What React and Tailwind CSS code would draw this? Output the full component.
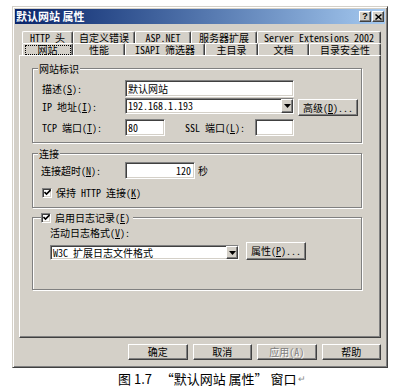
import React from "react";

const U = ({ c }) => <span className="underline underline-offset-1">{c}</span>;

const raised =
  "bg-[#d4d0c8] border border-t-white border-l-white border-r-[#404040] border-b-[#404040] shadow-[inset_-1px_-1px_0_#808080]";
const sunken =
  "bg-white border border-t-[#808080] border-l-[#808080] border-b-white border-r-white shadow-[inset_1px_1px_0_#404040,inset_-1px_-1px_0_#d4d0c8]";

function Tab({ className, children, selected }) {
  return (
    <div
      className={
        "h-[12px] overflow-hidden flex items-center justify-center border-t border-l border-r border-t-white border-l-white border-r-[#404040] rounded-t-[2px] shadow-[inset_-1px_0_0_#808080] bg-[#d4d0c8] whitespace-nowrap leading-[10px] " +
        className +
        (selected ? " relative z-10" : "")
      }
    >
      {selected ? (
        <span className="border border-dotted border-black px-[12px] leading-[8px] h-[10px] flex items-center">
          {children}
        </span>
      ) : (
        <span className="leading-[10px] h-[10px] block">{children}</span>
      )}
    </div>
  );
}

function Check() {
  return (
    <div className={sunken + " w-[10px] h-[10px] flex items-center justify-center shrink-0"}>
      <svg width="7" height="7" viewBox="0 0 7 7">
        <path d="M0.5 3 L2.5 5 L6.5 1" stroke="#000" strokeWidth="1.6" fill="none" />
      </svg>
    </div>
  );
}

function Select({ className, children }) {
  return (
    <div className={sunken + " flex items-center justify-between " + className}>
      <span className="pl-[2px] leading-none">{children}</span>
      <div className={raised + " w-[12px] h-full flex items-center justify-center"}>
        <svg width="7" height="4" viewBox="0 0 7 4">
          <path d="M0 0 H7 L3.5 4 Z" fill="#000" />
        </svg>
      </div>
    </div>
  );
}

function Button({ className, children }) {
  return (
    <div className={raised + " flex items-center justify-center leading-none " + className}>
      {children}
    </div>
  );
}

export default function App() {
  return (
    <div className="w-[396px] h-[388px] bg-white overflow-hidden font-['Noto_Sans_Mono_CJK_SC','Liberation_Mono','Noto_Sans_CJK_SC',monospace] text-[10px] text-black">
      <div className="pt-[6px] pl-[12px]">
        {/* window */}
        <div className="w-[376px] h-[362px] bg-[#d4d0c8] border border-t-[#d4d0c8] border-l-[#d4d0c8] border-r-[#404040] border-b-[#404040] shadow-[inset_1px_1px_0_#fff,inset_-1px_-1px_0_#808080] p-[2px] flex flex-col">
          {/* title bar */}
          <div className="h-[15px] bg-linear-to-r from-[#0a246a] to-[#a6caf0] flex items-center justify-between pl-[1px] pr-[1px]">
            <span className="text-white font-bold text-[11px] leading-none font-['Noto_Sans_CJK_SC',sans-serif]">
              默认网站&nbsp;属性
            </span>
            <div className="flex gap-[1px]">
              <div className={raised + " w-[12px] h-[11px] flex items-center justify-center font-bold text-[9px] leading-none font-['Liberation_Sans',sans-serif]"}>
                ?
              </div>
              <div className={raised + " w-[12px] h-[11px] flex items-center justify-center"}>
                <svg width="7" height="6" viewBox="0 0 7 6">
                  <path d="M0.5 0.5 L6.5 5.5 M6.5 0.5 L0.5 5.5" stroke="#000" strokeWidth="1.5" />
                </svg>
              </div>
            </div>
          </div>

          <div className="px-[4px] pt-[7px]">
            {/* tabs */}
            <div className="pl-[3px] flex flex-col">
              <div className="flex h-[12px]">
                <Tab className="w-[51px]">HTTP 头</Tab>
                <Tab className="w-[62px]">自定义错误</Tab>
                <Tab className="w-[56px]">ASP.NET</Tab>
                <Tab className="w-[66px]">服务器扩展</Tab>
                <Tab className="w-[124px]">Server Extensions 2002</Tab>
              </div>
              <div className="flex h-[12px]">
                <Tab className="w-[51px]" selected>网站</Tab>
                <Tab className="w-[52px]">性能</Tab>
                <Tab className="w-[80px]">ISAPI 筛选器</Tab>
                <Tab className="w-[53px]">主目录</Tab>
                <Tab className="w-[51px]">文档</Tab>
                <Tab className="w-[72px]">目录安全性</Tab>
              </div>
            </div>

            {/* panel */}
            <div className="w-[362px] h-[283px] border border-t-white border-l-white border-r-[#404040] border-b-[#404040] shadow-[inset_-1px_-1px_0_#808080] pl-[12px] pt-[12px] flex flex-col">
              {/* group 1 */}
              <div className="relative w-[330px] h-[75px] border border-[#808080] shadow-[inset_1px_1px_0_#fff,1px_1px_0_#fff] pl-[9px] pt-[11px]">
                <span className="absolute left-[5px] -top-[6px] bg-[#d4d0c8] px-[1px] leading-[11px]">网站标识</span>
                <div className="flex items-center h-[17px]">
                  <span className="w-[83px]">描述(<U c="S" />):</span>
                  <div className={sunken + " w-[169px] h-[17px] flex items-center pl-[2px]"}>默认网站</div>
                </div>
                <div className="flex items-start h-[18px] mt-[1px]">
                  <span className="w-[83px] h-[16px] flex items-center">IP 地址(<U c="I" />):</span>
                  <Select className="w-[169px] h-[16px]">192.168.1.193</Select>
                  <Button className="w-[60px] h-[17px] ml-[4px] mt-[1px]">高级(<U c="D" />)...</Button>
                </div>
                <div className="flex items-center h-[17px] mt-[3px]">
                  <span className="w-[83px]">TCP 端口(<U c="T" />):</span>
                  <div className={sunken + " w-[40px] h-[17px] flex items-center pl-[2px]"}>80</div>
                  <span className="ml-[20px] w-[70px]">SSL 端口(<U c="L" />):</span>
                  <div className={sunken + " w-[39px] h-[17px]"}></div>
                </div>
              </div>

              {/* group 2 */}
              <div className="relative w-[330px] h-[55px] mt-[10px] border border-[#808080] shadow-[inset_1px_1px_0_#fff,1px_1px_0_#fff] pl-[8px] pt-[8px]">
                <span className="absolute left-[5px] -top-[6px] bg-[#d4d0c8] px-[1px] leading-[11px]">连接</span>
                <div className="flex items-center h-[17px]">
                  <span className="w-[84px]">连接超时(<U c="N" />):</span>
                  <div className={sunken + " w-[70px] h-[17px] flex items-center justify-end pr-[3px]"}>120</div>
                  <span className="ml-[3px]">秒</span>
                </div>
                <div className="flex items-center mt-[6px] pl-[1px] gap-[4px]">
                  <Check />
                  <span>保持 HTTP 连接(<U c="K" />)</span>
                </div>
              </div>

              {/* group 3 */}
              <div className="relative w-[330px] h-[73px] mt-[9px] border border-[#808080] shadow-[inset_1px_1px_0_#fff,1px_1px_0_#fff] pl-[17px] pt-[9px]">
                <div className="absolute left-[8px] -top-[6px] bg-[#d4d0c8] pr-[3px] flex items-center gap-[4px] leading-[11px]">
                  <Check />
                  <span>启用日志记录(<U c="E" />)</span>
                </div>
                <div className="leading-[12px]">活动日志格式(<U c="V" />):</div>
                <div className="flex items-end mt-[3px]">
                  <Select className="w-[189px] h-[15px]">W3C 扩展日志文件格式</Select>
                  <Button className="w-[60px] h-[18px] ml-[7px]">属性(<U c="P" />)...</Button>
                </div>
              </div>
            </div>

            {/* bottom buttons */}
            <div className="flex pl-[109px] mt-[6px] gap-[5px]">
              <Button className="w-[60px] h-[16px]">确定</Button>
              <Button className="w-[60px] h-[16px]">取消</Button>
              <Button className="w-[60px] h-[16px] text-[#808080] [text-shadow:1px_1px_0_#fff]">应用(A)</Button>
              <Button className="w-[60px] h-[16px]">帮助</Button>
            </div>
          </div>
        </div>
      </div>

      {/* caption */}
      <div className="pl-[118px] pt-[3px] flex items-center h-[18px] text-[13px] leading-none font-['Noto_Sans_CJK_SC',sans-serif] whitespace-pre">
        <span>{"图 1.7   “默认网站 属性” 窗口"}</span>
        <span className="text-[9px] text-[#888] ml-[1px]">↵</span>
      </div>
    </div>
  );
}
